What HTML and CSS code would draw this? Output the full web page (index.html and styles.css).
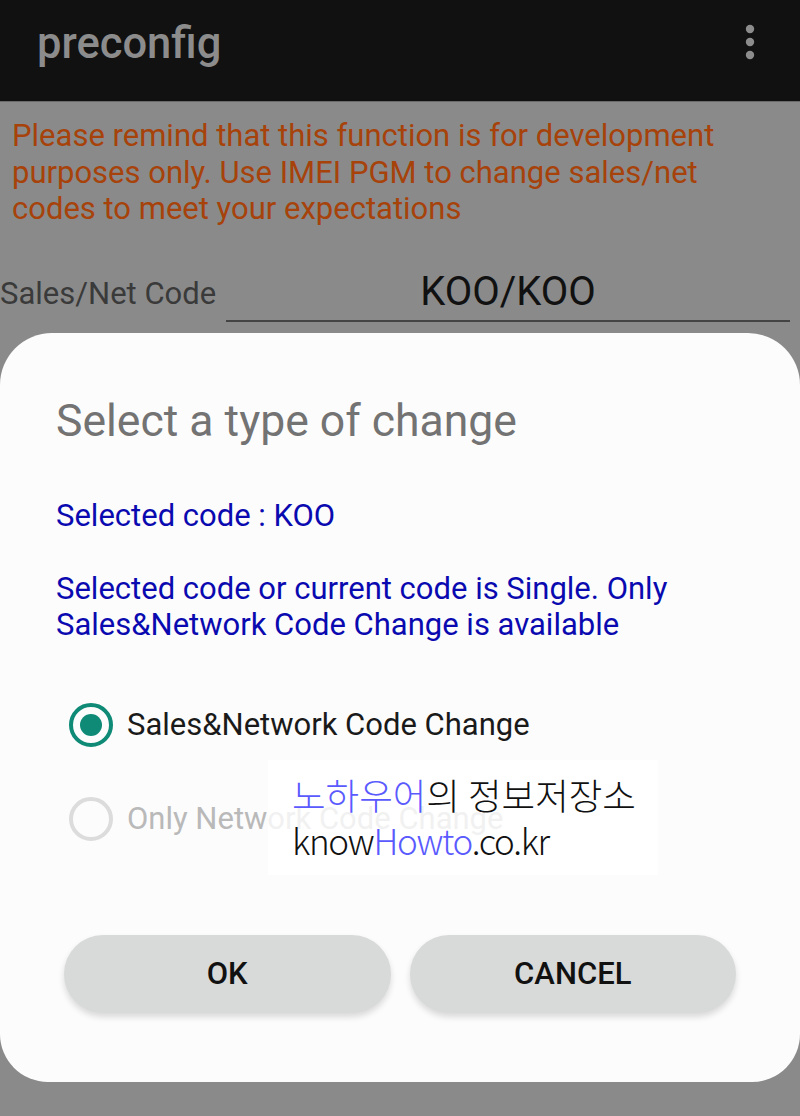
FILE: index.html
```html
<!DOCTYPE html>
<html lang="en">
<head>
<meta charset="utf-8">
<title>preconfig</title>
<link rel="stylesheet" href="styles.css">
</head>
<body>
<div class="screen">
  <header class="appbar">
    <span class="appbar-title">preconfig</span>
    <svg class="menu-icon" width="12" height="40" viewBox="0 0 12 40"><circle cx="6" cy="7" r="4.2" fill="#8c8c8c"/><circle cx="6" cy="20" r="4.2" fill="#8c8c8c"/><circle cx="6" cy="33" r="4.2" fill="#8c8c8c"/></svg>
  </header>
  <p class="notice">Please remind that this function is for development purposes only. Use IMEI PGM to change sales/net codes to meet your expectations</p>
  <div class="field">
    <span class="field-label">Sales/Net Code</span>
    <span class="field-input">KOO/KOO</span>
  </div>

  <section class="dialog">
    <h1 class="dialog-title">Select a type of change</h1>
    <p class="info">Selected code : KOO</p>
    <p class="info info-para">Selected code or current code is Single. Only Sales&amp;Network Code Change is available</p>
    <div class="options">
      <div class="option">
        <span class="radio radio-on"><span class="radio-dot"></span></span>
        <span class="option-label">Sales&amp;Network Code Change</span>
      </div>
      <div class="option option-disabled">
        <span class="radio radio-off"></span>
        <span class="option-label">Only Network Code Change</span>
      </div>
      <div class="watermark">
        <div class="wm-line wm-ko"><span class="wm-blue">노하우어</span>의 정보저장소</div>
        <div class="wm-line wm-en">know<span class="wm-blue">Howto</span>.co.kr</div>
      </div>
    </div>
    <div class="buttons">
      <button class="btn">OK</button>
      <button class="btn">CANCEL</button>
    </div>
  </section>
</div>
</body>
</html>
```

FILE: styles.css
```css
html, body {
  margin: 0;
  padding: 0;
}
body {
  width: 800px;
  height: 1116px;
  overflow: hidden;
  background: #8a8a8a;
  font-family: "Roboto", "Noto Sans", sans-serif;
}
.screen {
  display: flex;
  flex-direction: column;
}
.appbar {
  height: 102px;
  background: #111111;
  border-bottom: 1px solid #6a6a6a;
  box-sizing: border-box;
  display: flex;
  align-items: center;
  justify-content: space-between;
  padding: 0 44px 0 37px;
}
.appbar-title {
  color: #8c8c8c;
  font-size: 43.5px;
  font-weight: 500;
  margin-top: -14px;
}
.menu-icon {
  margin-top: -18px;
}
.notice {
  margin: 16px 0 0 0;
  padding: 0 50px 0 12px;
  color: #a6420a;
  font-size: 31px;
  line-height: 36.5px;
}
.field {
  display: flex;
  margin-top: 36px;
  height: 58px;
}
.field-label {
  width: 226px;
  color: #3a3a3a;
  font-size: 31px;
  line-height: 60px;
}
.field-input {
  width: 564px;
  border-bottom: 2px solid #444;
  text-align: center;
  color: #111;
  font-size: 40px;
  line-height: 56px;
}
.dialog {
  margin-top: 11px;
  background: #fcfcfc;
  border-radius: 52px 52px 48px 48px;
  padding: 63px 64px 69px 56px;
  height: 749px;
  box-sizing: border-box;
  display: flex;
  flex-direction: column;
}
.dialog-title {
  margin: 0;
  font-size: 44.5px;
  font-weight: 400;
  line-height: 50px;
  color: #737373;
}
.info {
  margin: 52px 0 0 0;
  color: #0a0ab0;
  font-size: 31px;
  line-height: 36px;
}
.info-para {
  margin-top: 37px;
}
.options {
  position: relative;
  margin-top: 35px;
}
.option {
  height: 94px;
  display: flex;
  align-items: center;
  padding-left: 13px;
}
.radio {
  width: 44px;
  height: 44px;
  border-radius: 50%;
  box-sizing: border-box;
  display: flex;
  align-items: center;
  justify-content: center;
  flex-shrink: 0;
}
.radio-on {
  border: 4.5px solid #0e8a76;
}
.radio-dot {
  width: 22px;
  height: 22px;
  border-radius: 50%;
  background: #0e8a76;
}
.radio-off {
  border: 4.5px solid #dcdcdc;
}
.option-label {
  margin-left: 14px;
  font-size: 31px;
  color: #1a1a1a;
}
.option-disabled .option-label {
  color: #b9b9b9;
}
.watermark {
  position: absolute;
  left: 212px;
  top: 82px;
  width: 390px;
  height: 115px;
  box-sizing: border-box;
  background: rgba(255, 255, 255, 0.8);
  padding: 12px 0 0 24px;
  font-family: "Noto Sans CJK KR", "Noto Sans", sans-serif;
  font-weight: 300;
  color: #111;
}
.wm-line {
  line-height: 45px;
  white-space: nowrap;
}
.wm-ko {
  font-size: 36.5px;
}
.wm-en {
  font-size: 35px;
  letter-spacing: -1.3px;
}
.wm-blue {
  color: #5a5aff;
}
.buttons {
  margin-top: auto;
  display: flex;
  gap: 19px;
  padding-left: 8px;
}
.btn {
  flex: 1;
  height: 78px;
  border: none;
  border-radius: 39px;
  background: #d8d9d9;
  box-shadow: 0 4px 6px rgba(0, 0, 0, 0.14);
  font-family: "Roboto", sans-serif;
  font-size: 31px;
  font-weight: 500;
  color: #111;
}
```
